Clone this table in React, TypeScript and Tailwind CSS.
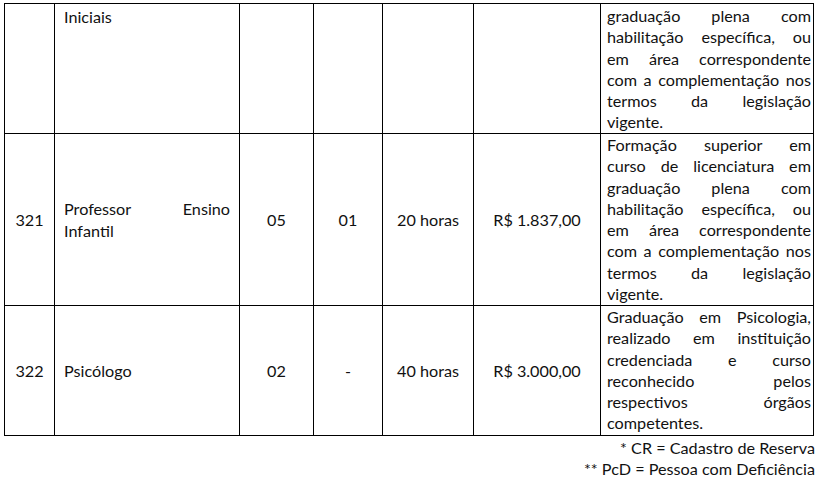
import React from 'react';

type Row = {
  code: string;
  cargo: string[];
  cargoTop?: boolean;
  vagas: string;
  cr: string;
  horas: string;
  salario: string;
  requisitos: string[];
  height: string;
  reqPad: string;
};

const rows: Row[] = [
  {
    code: '',
    cargo: ['Iniciais'],
    cargoTop: true,
    vagas: '',
    cr: '',
    horas: '',
    salario: '',
    requisitos: [
      'graduação plena com',
      'habilitação específica, ou',
      'em área correspondente',
      'com a complementação nos',
      'termos da legislação',
      'vigente.',
    ],
    height: 'h-[130px]',
    reqPad: 'pt-[1px]',
  },
  {
    code: '321',
    cargo: ['Professor Ensino', 'Infantil'],
    vagas: '05',
    cr: '01',
    horas: '20 horas',
    salario: 'R$ 1.837,00',
    requisitos: [
      'Formação superior em',
      'curso de licenciatura em',
      'graduação plena com',
      'habilitação específica, ou',
      'em área correspondente',
      'com a complementação nos',
      'termos da legislação',
      'vigente.',
    ],
    height: 'h-[172px]',
    reqPad: 'pt-0',
  },
  {
    code: '322',
    cargo: ['Psicólogo'],
    vagas: '02',
    cr: '-',
    horas: '40 horas',
    salario: 'R$ 3.000,00',
    requisitos: [
      'Graduação em Psicologia,',
      'realizado em instituição',
      'credenciada e curso',
      'reconhecido pelos',
      'respectivos órgãos',
      'competentes.',
    ],
    height: 'h-[130px]',
    reqPad: 'pt-0',
  },
];

// justified lines, the last one stays left aligned (like Word)
const Lines: React.FC<{ lines: string[] }> = ({ lines }) => (
  <>
    {lines.map((l, i) => (
      <div
        key={i}
        className={
          i < lines.length - 1
            ? 'whitespace-nowrap text-justify [text-align-last:justify]'
            : 'whitespace-nowrap text-left'
        }
      >
        {l}
      </div>
    ))}
  </>
);

const cell = 'border-r border-b border-black flex';

export default function App() {
  return (
    <div className="w-[820px] h-[483px] bg-white text-[#111] font-['Lato',sans-serif] text-[16.2px] leading-[21.3px] overflow-hidden">
      <div className="pt-[3px] pl-[4px]">
        <div className="w-[810px] border-l border-t border-black grid grid-cols-[50px_185px_74px_69px_91px_127px_213px]">
          {rows.map((r, idx) => (
            <React.Fragment key={idx}>
              <div className={`${cell} ${r.height} items-center justify-center`}>{r.code}</div>
              <div
                className={`${cell} ${r.height} flex-col px-[9px] ${
                  r.cargoTop ? 'justify-start pt-[2px]' : 'justify-center'
                }`}
              >
                <Lines lines={r.cargo} />
              </div>
              <div className={`${cell} ${r.height} items-center justify-center`}>{r.vagas}</div>
              <div className={`${cell} ${r.height} items-center justify-center`}>{r.cr}</div>
              <div className={`${cell} ${r.height} items-center justify-center`}>{r.horas}</div>
              <div className={`${cell} ${r.height} items-center justify-center`}>{r.salario}</div>
              <div className={`${cell} ${r.height} flex-col pl-[6px] pr-[2px] ${r.reqPad}`}>
                <Lines lines={r.requisitos} />
              </div>
            </React.Fragment>
          ))}
        </div>
      </div>
      <div className="w-[815px] text-right mt-[1px]">
        <div>* CR = Cadastro de Reserva</div>
        <div>** PcD = Pessoa com Deficiência</div>
      </div>
    </div>
  );
}
